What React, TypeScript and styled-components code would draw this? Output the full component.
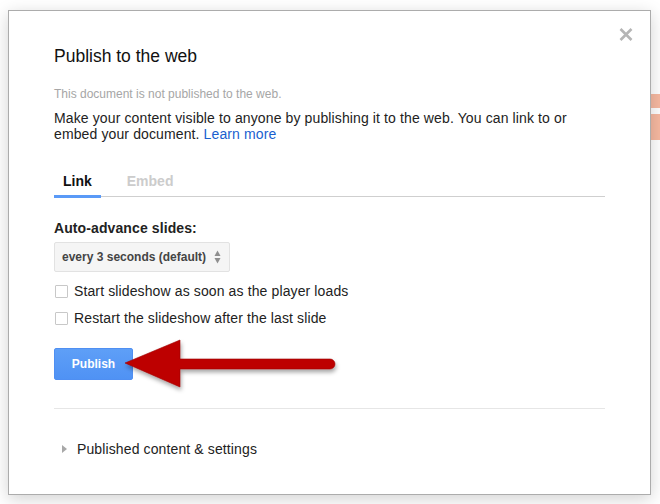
import React from "react";
import styled, { createGlobalStyle } from "styled-components";

const GlobalStyle = createGlobalStyle`
  html, body {
    margin: 0;
    padding: 0;
    background: #ffffff;
  }
  body {
    font-family: "Liberation Sans", Arial, sans-serif;
    color: #222;
  }
  * { box-sizing: border-box; }
`;

const Page = styled.div`
  position: relative;
  width: 660px;
  height: 504px;
  overflow: hidden;
  padding: 10px 0 0 8px;
  background: #fff;
`;

const Backdrop = styled.div<{ $top: number; $height: number }>`
  position: absolute;
  left: 651px;
  top: ${(p) => p.$top}px;
  width: 9px;
  height: ${(p) => p.$height}px;
  background: #f7b9a1;
`;

const Dialog = styled.div`
  position: relative;
  z-index: 1;
  width: 643px;
  height: 485px;
  border: 1px solid #acacac;
  background: #fff;
  padding: 33px 45px 0 45px;
  box-shadow: 0 4px 16px rgba(0, 0, 0, 0.18);
  display: flex;
  flex-direction: column;
`;

const CloseButton = styled.button`
  position: absolute;
  top: 17px;
  right: 17px;
  width: 14px;
  height: 13px;
  padding: 0;
  border: 0;
  background: transparent;
  display: flex;
  cursor: pointer;
`;

const Title = styled.h1`
  margin: 0;
  font-size: 17.5px;
  line-height: 24px;
  font-weight: normal;
  color: #111;
`;

const Status = styled.div`
  margin-top: 18px;
  font-size: 12px;
  line-height: 16px;
  color: #a6a6a6;
`;

const Description = styled.p`
  margin: 8px 0 0;
  max-width: 532px;
  font-size: 14px;
  line-height: 16px;
  letter-spacing: 0.12px;
  color: #222;
`;

const LearnMore = styled.a`
  color: #1a5fcf;
  text-decoration: none;
`;

const TabBar = styled.div`
  margin-top: 24px;
  display: flex;
  gap: 17px;
  border-bottom: 1px solid #cfcfcf;
`;

const Tab = styled.div<{ $active?: boolean }>`
  padding: 7px 9px 6px;
  margin-bottom: -2px;
  font-size: 14px;
  line-height: 16px;
  font-weight: bold;
  color: ${(p) => (p.$active ? "#111" : "#cccccc")};
  border-bottom: 3px solid ${(p) => (p.$active ? "#5a9af7" : "transparent")};
`;

const FieldLabel = styled.div`
  margin-top: 23px;
  font-size: 14px;
  line-height: 16px;
  letter-spacing: 0.1px;
  font-weight: bold;
  color: #222;
`;

const Select = styled.div`
  margin-top: 6px;
  width: 176px;
  height: 30px;
  border: 1px solid #e2e2e2;
  border-radius: 2px;
  background: #f5f5f5;
  display: flex;
  align-items: center;
  justify-content: space-between;
  padding: 0 8px 0 7px;
  font-size: 12px;
  font-weight: bold;
  color: #444;
`;

const CheckRow = styled.label`
  margin-top: 11px;
  display: flex;
  align-items: center;
  font-size: 14px;
  line-height: 16px;
  letter-spacing: 0.12px;
  color: #222;
`;

const Checkbox = styled.span`
  width: 13px;
  height: 13px;
  margin: 0 6px 0 1px;
  border: 1px solid #c8c8c8;
  border-radius: 1px;
  background: #fff;
`;

const PublishButton = styled.button`
  margin-top: 22px;
  width: 79px;
  height: 32px;
  border: 1px solid #4f8ff2;
  border-radius: 2px;
  background: linear-gradient(#5e9ff7, #4f92f4);
  color: #fff;
  font-family: "Liberation Sans", Arial, sans-serif;
  font-size: 12px;
  font-weight: bold;
  padding: 0;
  cursor: pointer;
`;

const Separator = styled.hr`
  margin: 28px 0 0;
  border: 0;
  border-top: 1px solid #e6e6e6;
  height: 0;
`;

const Expander = styled.div`
  margin-top: 32px;
  display: flex;
  align-items: center;
  gap: 10px;
  padding-left: 8px;
  font-size: 14px;
  line-height: 16px;
  letter-spacing: 0.12px;
  color: #222;
`;

const ArrowOverlay = styled.svg`
  position: absolute;
  z-index: 2;
  left: 120px;
  top: 335px;
  overflow: visible;
`;

export default function App() {
  return (
    <>
      <GlobalStyle />
      <Page>
        <Backdrop $top={94} $height={14} />
        <Backdrop $top={114} $height={26} />
        <Dialog>
          <CloseButton aria-label="Close">
            <svg width="14" height="13" viewBox="0 0 14 13">
              <path d="M1.5 1 L12.5 12 M12.5 1 L1.5 12" stroke="#b5b5b5" strokeWidth="2.6" />
            </svg>
          </CloseButton>
          <Title>Publish to the web</Title>
          <Status>This document is not published to the web.</Status>
          <Description>
            Make your content visible to anyone by publishing it to the web. You can link to or embed your document.{" "}
            <LearnMore href="#">Learn more</LearnMore>
          </Description>
          <TabBar>
            <Tab $active>Link</Tab>
            <Tab>Embed</Tab>
          </TabBar>
          <FieldLabel>Auto-advance slides:</FieldLabel>
          <Select>
            <span>every 3 seconds (default)</span>
            <svg width="7" height="14" viewBox="0 0 7 14">
              <path d="M0.5 6 L3.5 0.5 L6.5 6 Z" fill="#8f8f8f" />
              <path d="M0.5 8 L6.5 8 L3.5 13.5 Z" fill="#8f8f8f" />
            </svg>
          </Select>
          <CheckRow>
            <Checkbox />
            Start slideshow as soon as the player loads
          </CheckRow>
          <CheckRow>
            <Checkbox />
            Restart the slideshow after the last slide
          </CheckRow>
          <div>
            <PublishButton>Publish</PublishButton>
          </div>
          <Separator />
          <Expander>
            <svg width="5" height="8" viewBox="0 0 5 8">
              <path d="M0 0 L5 4 L0 8 Z" fill="#a8a8a8" />
            </svg>
            Published content &amp; settings
          </Expander>
        </Dialog>
        <ArrowOverlay width="225" height="60" viewBox="0 0 225 60">
          <defs>
            <filter id="arrowShadow" x="-20%" y="-30%" width="140%" height="170%">
              <feDropShadow dx="1" dy="3" stdDeviation="2" floodColor="#000" floodOpacity="0.35" />
            </filter>
          </defs>
          <path
            d="M5 28 L60 5 L60 24 L210 24 A5 5 0 0 1 210 34 L60 34 L60 52 Z"
            fill="#bd0000"
            stroke="#a00000"
            strokeWidth="0.6"
            strokeLinejoin="round"
            filter="url(#arrowShadow)"
          />
        </ArrowOverlay>
      </Page>
    </>
  );
}
